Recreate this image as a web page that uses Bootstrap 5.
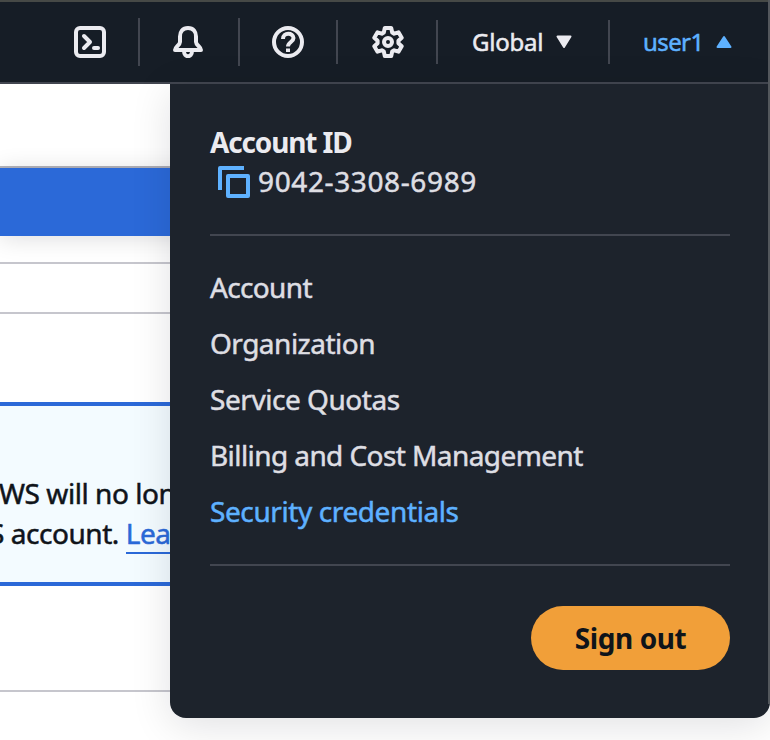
<!DOCTYPE html>
<html lang="en">
<head>
<meta charset="utf-8">
<meta name="viewport" content="width=device-width, initial-scale=1">
<title>Security credentials</title>
<link href="https://cdn.jsdelivr.net/npm/bootstrap@5.3.0/dist/css/bootstrap.min.css" rel="stylesheet">
<style>
  body { font-family: "Noto Sans", "Open Sans", sans-serif; font-size: 28px; line-height: 40px; color: #0f141a; background: #fff; -webkit-text-stroke: .5px currentColor; }
  .shell { width: 770px; height: 740px; }
  .topbar { height: 84px; padding: 0; background: #161d26; border-top: 2px solid #464946; border-bottom: 2px solid #424650; color: #ebebf0; font-size: 24px; line-height: 32px; }
  .tool { width: 98px; height: 80px; }
  .tool-first { width: 138px; padding-left: 74px; }
  .tool-help { width: 96px; }
  .tool-gear { padding-left: 2px; }
  .tool-bell { padding-right: 2px; }
  .rule { width: 2px; height: 44px; background: #424650; }
  .rule-tall { height: 48px; }
  .region { width: 170px; padding-left: 34px; color: #ebebf0; }
  .user { width: 160px; padding-left: 33px; color: #5eb1ff; }
  .region span { width: 84px; letter-spacing: -.25px; }
  .user span { width: 73px; letter-spacing: -.6px; }
  .topbar svg, .panel svg { display: block; flex: none; }
  .crumb-space { height: 84px; border-bottom: 2px solid #b4b4bb; }
  .banner { height: 68px; background: #2b69d8; box-shadow: 0 2px 24px rgba(0,7,22,.14); }
  .strip { height: 28px; border-bottom: 2px solid #c6c6cd; }
  .strip-2 { height: 50px; }
  .strip-3 { height: 106px; }
  .gap-top { height: 88px; }
  .notice { height: 184px; background: #f3fbff; border-top: 4px solid #2b69d8; border-bottom: 4px solid #2b69d8; padding-top: 67px; white-space: nowrap; letter-spacing: -.45px; }
  .notice-a { margin-left: -1px; }
  .notice-b { margin-left: -11px; }
  .notice a { color: #2b69d8; text-decoration: none; border-bottom: 2px solid #2b69d8; }
  .panel { left: 170px; top: 84px; width: 600px; height: 634px; background: #1d232c; border-radius: 0 0 16px 16px; padding: 38px 40px; color: #dedee3; box-shadow: 0 8px 40px rgba(0,7,22,.12); }
  .panel-rule { height: 2px; background: #424650; }
  .panel-head { font-weight: 700; color: #ebebf0; letter-spacing: -1.15px; -webkit-text-stroke: 0; }
  .acct { padding-left: 8px; gap: 8px; }
  .acct span { letter-spacing: .62px; line-height: 38px; margin-bottom: 2px; }
  .after-id { margin-top: 32px; }
  .links { padding: 23px 0 25px; }
  .links a { color: #dedee3; text-decoration: none; line-height: 40px; padding: 8px 0; width: max-content; }
  .links a.current { color: #5eb1ff; letter-spacing: -.4px; }
  .t-acc { letter-spacing: -.65px; }
  .t-org { letter-spacing: -.5px; }
  .t-quo { letter-spacing: -.45px; }
  .t-bil { letter-spacing: -.58px; }
  .signout, .signout:hover { width: 199px; height: 64px; margin-top: 40px; padding: 0; background: #f19f39; color: #0f141a; font-size: 28px; line-height: 40px; font-weight: 700; border: 0; letter-spacing: -.4px; -webkit-text-stroke: 0; }
  .edge { right: 0; top: 0; width: 2px; height: 704px; background: #53575c; }
</style>
</head>
<body>
<div class="shell position-relative overflow-hidden">
  <nav class="topbar navbar flex-nowrap justify-content-start">
    <div class="tool tool-first d-flex align-items-center">
      <svg width="32" height="32" viewBox="0 0 32 32" fill="none" stroke="#ebebf0" stroke-width="4" stroke-linejoin="round"><rect x="2" y="2" width="28" height="28" rx="4"/><path d="M10 10l6 6-6 6" stroke-linecap="round"/><path d="M20 22h4" stroke-linecap="round"/></svg>
    </div>
    <div class="rule rule-tall"></div>
    <div class="tool tool-bell d-flex align-items-center justify-content-center">
      <svg width="32" height="32" viewBox="0 0 32 32" fill="none" stroke="#ebebf0" stroke-width="4" stroke-linejoin="round"><path d="M16 2C10.500 2 8 6 8 10.500V16c0 3-5 5-5 8h26c0-3-5-5-5-8v-5.500C24 6 21.500 2 16 2z"/><path d="M12 25c0 7 8 7 8 0"/></svg>
    </div>
    <div class="rule rule-tall"></div>
    <div class="tool tool-help d-flex align-items-center justify-content-center">
      <svg width="32" height="32" viewBox="0 0 32 32" fill="none" stroke="#ebebf0" stroke-width="4"><circle cx="16" cy="16" r="14"/><path d="M11 13c0-7 10.500-6.500 10.500-1 0 4-5.500 4-5.500 8.500"/><path d="M16 22.500v3.500"/></svg>
    </div>
    <div class="rule"></div>
    <div class="tool tool-gear d-flex align-items-center justify-content-center">
      <svg width="32" height="32" viewBox="0 0 32 32" fill="none" stroke="#ebebf0" stroke-width="4" stroke-linejoin="round"><path d="M12.800 2h6.400l1 4.500 2 1.200 4.300-1.400 3.200 5.400-3.300 3.100v2.400l3.300 3.100-3.200 5.400-4.300-1.400-2 1.200-1 4.500h-6.400l-1-4.500-2-1.200-4.300 1.400-3.200-5.400 3.300-3.100v-2.400l-3.300-3.100 3.200-5.400 4.300 1.400 2-1.200z"/><circle cx="16" cy="16" r="4"/></svg>
    </div>
    <div class="rule"></div>
    <div class="region d-flex align-items-center">
      <span>Global</span>
      <svg width="16" height="14" viewBox="0 0 16 14"><path d="M1.500 1.500h13L8 12z" fill="#ebebf0" stroke="#ebebf0" stroke-width="2" stroke-linejoin="round"/></svg>
    </div>
    <div class="rule"></div>
    <div class="user d-flex align-items-center">
      <span>user1</span>
      <svg width="16" height="14" viewBox="0 0 16 14"><path d="M1.500 12h13L8 2z" fill="#5eb1ff" stroke="#5eb1ff" stroke-width="2" stroke-linejoin="round"/></svg>
    </div>
  </nav>

  <main>
    <div class="crumb-space"></div>
    <div class="banner"></div>
    <div class="strip"></div>
    <div class="strip strip-2"></div>
    <div class="gap-top"></div>
    <div class="notice">
      <div class="notice-a">WS will no lon</div>
      <div class="notice-b">S account. <a href="#">Lea</a></div>
    </div>
    <div class="strip strip-3"></div>
  </main>

  <section class="panel position-absolute">
    <div class="panel-head">Account ID</div>
    <div class="acct d-flex align-items-center">
      <svg width="32" height="32" viewBox="0 0 32 32" fill="none" stroke="#5eb1ff" stroke-width="4" stroke-linejoin="round"><path d="M26 2H2v22"/><rect x="10" y="10" width="20" height="20"/></svg>
      <span>9042-3308-6989</span>
    </div>
    <div class="panel-rule after-id"></div>
    <div class="links d-flex flex-column">
      <a href="#" class="t-acc">Account</a>
      <a href="#" class="t-org">Organization</a>
      <a href="#" class="t-quo">Service Quotas</a>
      <a href="#" class="t-bil">Billing and Cost Management</a>
      <a href="#" class="current">Security credentials</a>
    </div>
    <div class="panel-rule"></div>
    <div class="d-flex justify-content-end">
      <button type="button" class="signout btn rounded-pill">Sign out</button>
    </div>
  </section>
  <div class="edge position-absolute"></div>
</div>
<script src="https://cdn.jsdelivr.net/npm/bootstrap@5.3.0/dist/js/bootstrap.bundle.min.js"></script>
</body>
</html>
